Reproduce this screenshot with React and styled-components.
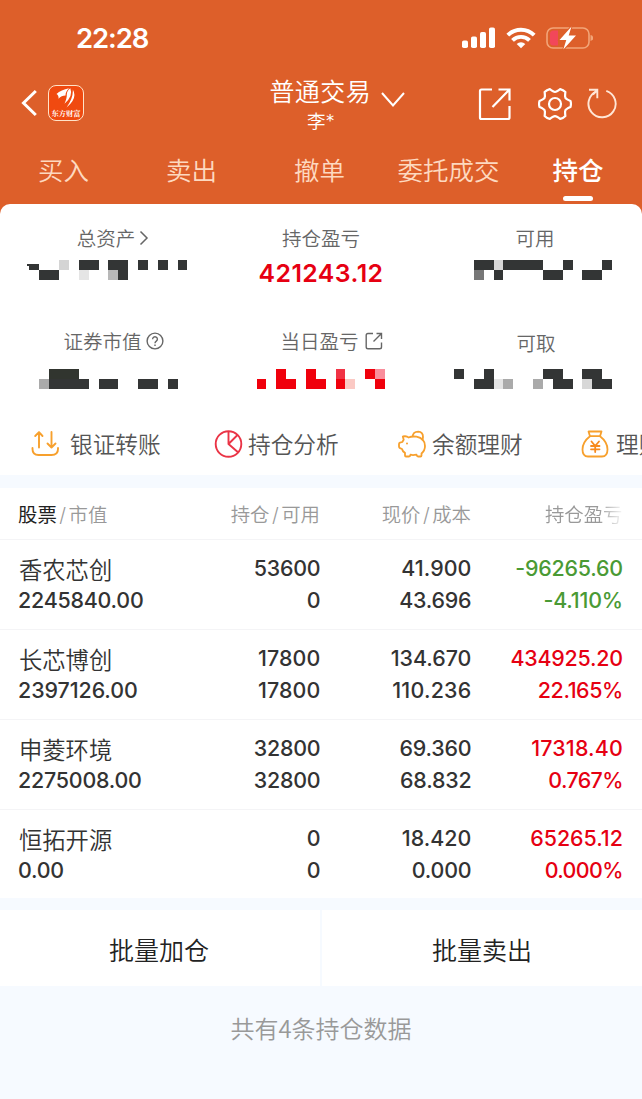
import React from "react";
import styled, { createGlobalStyle } from "styled-components";

const Global = createGlobalStyle`
  * { box-sizing: border-box; }
  body {
    margin: 0;
    background: #f6faff;
    font-family: Inter, "Noto Sans CJK SC", sans-serif;
    color: #333;
  }
`;

const Screen = styled.div`
  width: 642px;
  height: 1099px;
  overflow: hidden;
  display: flex;
  flex-direction: column;
  background: #f6faff;
`;

const Header = styled.header`
  height: 214px;
  margin-bottom: -10px;
  flex: none;
  background: #dd5f2a;
  color: #fff;
`;

const StatusBar = styled.div`
  height: 74px;
  padding: 1px 49px 0 76px;
  display: flex;
  align-items: center;
  justify-content: space-between;
`;

const Clock = styled.div`
  font-size: 27.5px;
  line-height: 32px;
  font-weight: 600;
  letter-spacing: -1.1px;
`;

const StatusIcons = styled.div`
  display: flex;
  align-items: center;
  height: 24px;
`;

const Glyph = styled.svg`
  display: block;
  flex: none;
  margin-left: ${(p) => p.$gap || 0}px;
  margin-top: ${(p) => p.$drop || 0}px;
`;

const NavBar = styled.div`
  height: 64px;
  display: grid;
  grid-template-columns: 214px 1fr 214px;
`;

const NavLeft = styled.div`
  display: flex;
  align-items: center;
  padding: 0 0 6px 20px;
`;

const AppBadge = styled.div`
  width: 36px;
  height: 36px;
  margin-left: 10px;
  border: 1px solid #ffe3c8;
  border-radius: 8px;
  background: #f04a10;
  display: flex;
  flex-direction: column;
  align-items: center;
  overflow: hidden;
`;

const BadgeText = styled.span`
  font: 700 7.3px/9px "Noto Serif CJK SC", "Noto Sans CJK SC", serif;
  white-space: nowrap;
`;

const Titles = styled.div`
  display: flex;
  flex-direction: column;
  align-items: center;
`;

const TitleRow = styled.div`
  display: flex;
  align-items: center;
  height: 31px;
  margin-left: 33px;
  font-size: 25px;
  font-weight: 350;
  letter-spacing: 0.4px;
  white-space: nowrap;
`;

const Account = styled.div`
  font-size: 18.5px;
  font-weight: 350;
  line-height: 32px;
  height: 32px;
`;

const NavRight = styled.div`
  display: flex;
  align-items: center;
  justify-content: flex-end;
  padding: 0 24px 5px 0;
`;

const Tabs = styled.nav`
  height: 66px;
  display: grid;
  grid-template-columns: 127px 129px 127px 131px 1fr;
`;

const Tab = styled.div`
  display: flex;
  flex-direction: column;
  align-items: center;
  padding-top: 14px;
  font-size: 25.5px;
  line-height: 38px;
  font-weight: ${(p) => (p.$active ? 500 : 350)};
  color: ${(p) => (p.$active ? "#fff" : "#fdd9c0")};

  &::after {
    content: "";
    width: 30px;
    height: 5px;
    margin-top: 6px;
    border-radius: 3px;
    background: ${(p) => (p.$active ? "#fff" : "transparent")};
  }
`;

const Summary = styled.section`
  height: 271px;
  flex: none;
  border-radius: 10px 10px 0 0;
  background: #fff;
  overflow: hidden;
`;

const StatGrid = styled.div`
  display: grid;
  grid-template-columns: repeat(3, 214px);
  grid-template-rows: 103px 107px;
`;

const Stat = styled.div`
  display: flex;
  flex-direction: column;
  align-items: center;
  padding-top: 18px;
`;

const StatLabel = styled.div`
  display: flex;
  align-items: center;
  height: 30px;
  padding-left: ${(p) => p.$shift || 0}px;
  margin-top: ${(p) => p.$drop || 0}px;
  margin-bottom: ${(p) => p.$below}px;
  font-size: 19.5px;
  font-weight: 350;
  color: #666;
  white-space: nowrap;
`;

const StatValue = styled.div`
  font-size: 24.8px;
  line-height: 30px;
  font-weight: 600;
  letter-spacing: 0.45px;
  color: #e60012;
`;

const Shortcuts = styled.div`
  display: flex;
  height: 61px;
  padding-left: 30px;
  overflow: hidden;
`;

const Shortcut = styled.div`
  flex: none;
  width: ${(p) => p.$width || 184}px;
  height: 58px;
  display: flex;
  align-items: center;
  gap: ${(p) => p.$gap}px;
  font-size: 22.7px;
  font-weight: 350;
  color: #555;
  white-space: nowrap;
`;

const Holdings = styled.section`
  flex: none;
  height: 410px;
  margin-top: 13px;
  background: #fff;
`;

const columns = "170px 132px 151px 151.5px";

const HeadRow = styled.div`
  height: 52px;
  padding: 0 0 0 18px;
  display: grid;
  grid-template-columns: ${columns};
  align-items: center;
  border-bottom: 1px solid #f4f4f6;
  font-size: 19.4px;
  font-weight: 350;
  color: #999;
  white-space: nowrap;
`;

const HeadCell = styled.div`
  text-align: ${(p) => (p.$first ? "left" : "right")};
  -webkit-mask-image: ${(p) => (p.$fade ? "linear-gradient(90deg, #000 84%, transparent 101%)" : "none")};

  b { font-weight: 400; color: #222; }
  i { font-style: normal; padding: 0 2.5px; }
`;

const Row = styled.div`
  height: 90px;
  padding: 13px 0 0 18px;
  display: grid;
  grid-template-columns: ${columns};
  border-bottom: 1px solid ${(p) => (p.$last ? "transparent" : "#f4f4f6")};
`;

const Cell = styled.div`
  text-align: ${(p) => (p.$first ? "left" : "right")};
  margin-right: ${(p) => (p.$first ? 0 : -0.4)}px;
  font-size: 21.4px;
  line-height: 31.5px;
  font-weight: 500;
  color: ${(p) => p.$color || "#333"};
  white-space: nowrap;
`;

const Line = styled.div`
  height: 31.5px;
  letter-spacing: ${(p) => p.$track}px;
`;

/* The narrow "1" of the typeface is opened up so that the columns keep an even width. */
const Figure = ({ children }) => {
  const ones = children.split("1").length - 1;
  const base = children.endsWith("%") ? -0.6 : -0.2;
  return <Line $track={(base + (ones * 1.5) / children.length).toFixed(2)}>{children}</Line>;
};

const Name = styled.div`
  height: 31.5px;
  padding: 2px 0 0 1px;
  font-size: 23.3px;
  font-weight: 350;
`;

const Actions = styled.div`
  flex: none;
  height: 76px;
  margin-top: 12px;
  display: grid;
  grid-template-columns: 320px 320px;
  gap: 2px;
`;

const Action = styled.button`
  border: 0;
  padding: 5px ${(p) => p.$right || 0}px 0 0;
  background: #fff;
  font: 350 25px/36px Inter, "Noto Sans CJK SC", sans-serif;
  color: #222;
`;

const Footnote = styled.p`
  margin: 24px 0 0;
  text-align: center;
  font: 350 24px/36px "Noto Sans CJK SC", sans-serif;
  color: #999;
`;

const D = "#333535";
const R = "#f0000c";

/* Each block is [x, row, width, colour] on a two-row grid of 10px cells. */
const hidden = {
  assets: [[27, 0, 12, D], [39, 1, 20, D], [59, 0, 10, "#d4d4d4"], [79, 0, 20, D], [79, 1, 10, "#e5e5e5"], [108, 0, 20, D], [108, 1, 10, "#b8b8b8"], [118, 1, 10, D], [138, 0, 10, D], [158, 0, 10, D], [178, 0, 9, D]],
  usable: [[46, 0, 20, D], [66, 0, 9, "#d8d8d8"], [75, 0, 40, D], [46, 1, 10, "#777"], [66, 1, 9, D], [115, 1, 20, D], [135, 0, 10, D], [154, 1, 20, D], [174, 0, 10, D]],
  market: [[39, 1, 10, "#aaa"], [49, 0, 30, "#31352f"], [49, 1, 40, D], [99, 1, 19, D], [138, 1, 20, D], [168, 1, 10, D]],
  today: [[43, 1, 9, R], [62, 0, 10, R], [62, 1, 20, R], [92, 0, 10, R], [92, 1, 20, R], [122, 0, 9, "#f13345"], [122, 1, 9, R], [131, 1, 10, "#fbc9c4"], [151, 0, 10, R], [161, 0, 10, "#f98d9b"], [161, 1, 10, R]],
  cash: [[26, 0, 10, D], [56, 0, 10, D], [46, 1, 20, D], [66, 1, 9, "#e4e4e4"], [75, 1, 10, "#aaa"], [105, 1, 10, "#aaa"], [115, 0, 20, D], [125, 1, 20, D], [154, 0, 20, D], [154, 1, 10, "#d8d8d8"], [164, 1, 20, D]],
};

const Mosaic = ({ blocks, clip }) => (
  <Glyph width="214" height="20" shapeRendering="crispEdges">
    {blocks.map(([x, row, w, fill], i) => (
      <rect key={i} x={x} y={row * 10} width={w} height="10" fill={fill} />
    ))}
    {clip && <path d="M27 0h12v4H27zM27 6h2v4h-2z" fill="#fff" />}
  </Glyph>
);

const Signal = () => (
  <Glyph width="34" height="22" viewBox="0 0 34 22" fill="#fff">
    <rect x="0" y="13.5" width="6" height="7.5" rx="1.8" />
    <rect x="9" y="9.5" width="6" height="11.5" rx="1.8" />
    <rect x="18" y="5" width="6" height="16" rx="1.8" />
    <rect x="27" y="0.5" width="6" height="20.5" rx="1.8" />
  </Glyph>
);

const Wifi = () => (
  <Glyph $gap={10} width="30" height="22" viewBox="0 0 30 22" fill="none" stroke="#fff" strokeWidth="3.9">
    <path d="M1.800 8.200a18.600 18.600 0 0 1 26.400 0" />
    <path d="M6.500 13.400a12 12 0 0 1 17 0" />
    <path d="M15 21.300l-4.300-4.200a6.200 6.200 0 0 1 8.600 0z" fill="#fff" stroke="none" />
  </Glyph>
);

const Battery = () => (
  <Glyph $gap={9} width="48" height="24" viewBox="0 0 48 24">
    <rect x="2" y="2" width="42" height="20" rx="6" fill="none" stroke="#f2a578" strokeWidth="1.6" />
    <path d="M8.500 4.500H13v15H8.500Q5 19.500 5 16V8Q5 4.500 8.500 4.500z" fill="#f2475a" />
    <path d="M45.500 9q3 .8 3 3t-3 3z" fill="#f2a578" />
    <path d="M26.500.5 14.500 14h6.800l-3 9.500L31 9.500h-7.300z" fill="#fff" stroke="#dd5f2a" strokeWidth="2" paintOrder="stroke" />
  </Glyph>
);

const Back = () => (
  <Glyph width="18" height="28" viewBox="0 0 18 28" fill="none" stroke="#fff" strokeWidth="3">
    <path d="M15.800 2 3.500 14l12.300 12" />
  </Glyph>
);

const BrandMark = () => (
  <Glyph width="22" height="23" viewBox="0 0 22 23" fill="#fff">
    <path d="M1.500 8Q6 4 14 2.300 10.500 5.500 10.500 9.500 6.500 9.500 3.500 12.800 4 9.500 1.500 8z" />
    <path d="M15.300 2.300Q18.500 10 9.500 17.800 12 12 11.800 8.500 12 4.500 15.300 2.300z" />
    <path d="M17.800 3.500Q23 12 11.500 21.500 18.500 12 17.800 3.500z" />
  </Glyph>
);

const ChevronDown = () => (
  <Glyph $gap={8.500} $drop={19} width="26" height="18" viewBox="0 0 26 18" fill="none" stroke="#fff" strokeWidth="2">
    <path d="M2 3 13 15.500 24 3" />
  </Glyph>
);

const Share = () => (
  <Glyph width="34" height="34" viewBox="0 0 34 34" fill="none" stroke="#fff" strokeWidth="2.200">
    <path d="M14 2.500H3.500Q2 2.500 2 4V30.500q0 1.500 1.500 1.500H30q1.500 0 1.500-1.500V19" />
    <path d="M20.500 2.500h11V13.500M31.500 2.500 14.500 20" />
  </Glyph>
);

/* Outline of a six-lobed wheel: rounded lobes joined by concave curves. */
const gearPath = (() => {
  const at = (r, deg) => {
    const a = (deg * Math.PI) / 180;
    return `${(17 + r * Math.cos(a)).toFixed(2)} ${(17 + r * Math.sin(a)).toFixed(2)}`;
  };
  let d = `M${at(15.8, -11)}`;
  for (let a = 0; a < 360; a += 60) {
    d += `Q${at(16.4, a)} ${at(15.8, a + 11)}Q${at(14, a + 16)} ${at(13, a + 21)}`;
    d += `Q${at(11.3, a + 30)} ${at(13, a + 39)}Q${at(14, a + 44)} ${at(15.8, a + 49)}`;
  }
  return d + "Z";
})();

const Gear = () => (
  <Glyph $gap={26} width="34" height="34" viewBox="0 0 34 34" fill="none" stroke="#fff" strokeWidth="2.200" strokeLinejoin="round">
    <path d={gearPath} />
    <circle cx="17" cy="17" r="6" />
  </Glyph>
);

const Refresh = () => (
  <Glyph $gap={14} width="32" height="34" viewBox="0 0 32 34" fill="none" stroke="#ffe6d6" strokeWidth="1.900">
    <path d="M20.300 3.800A13.600 13.600 0 1 1 10.500 4.300" />
    <path d="M3 2.800h8.300v8.400M11.300 2.800 7 7.500" />
  </Glyph>
);

const ChevronRight = () => (
  <Glyph $gap={4} $drop={1} width="10" height="16" viewBox="0 0 10 16" fill="none" stroke="#666" strokeWidth="1.500">
    <path d="m1.500 1.500 6.500 6.500-6.500 6.500" />
  </Glyph>
);

const Help = () => (
  <Glyph $gap={4} $drop={1} width="18" height="18" viewBox="0 0 18 18" fill="none" stroke="#666" strokeWidth="1.400">
    <circle cx="9" cy="9" r="7.900" />
    <path d="M6.600 7.200a2.400 2.400 0 1 1 3.700 2Q9 10 9 11.200M9 12.500v1.500" />
  </Glyph>
);

const SmallShare = () => (
  <Glyph $gap={6} $drop={1} width="18" height="18" viewBox="0 0 18 18" fill="none" stroke="#666" strokeWidth="1.400">
    <path d="M8 1.500H3q-1.800 0-1.800 1.800V15q0 1.800 1.800 1.800h11.700q1.800 0 1.800-1.800v-4.500" />
    <path d="M11.500 1.500h5V7M16.500 1.500 8.500 9.500" />
  </Glyph>
);

const Transfer = () => (
  <Glyph $drop={2} width="30" height="28" viewBox="0 0 30 28" fill="none" stroke="#f7a02d" strokeWidth="1.900" strokeLinecap="round" strokeLinejoin="round">
    <path d="M9 17.500V2.200L5.200 6M9 2.200 12.500 6M21.500 2v15.500l4-4M21.500 17.500l-4-4" />
    <path d="M2.500 18v1q0 6 6 6h13q6.500 0 6.500-6v-1" />
  </Glyph>
);

const Pie = () => (
  <Glyph $drop={2} width="29" height="28" viewBox="0 0 29 28" fill="none" stroke="#ea3446" strokeWidth="1.900" strokeLinejoin="round">
    <circle cx="14.500" cy="14" r="12.800" />
    <path d="M14.500 1.200V14l9.500 8.300M14.500 14l9-9" />
  </Glyph>
);

const Piggy = () => (
  <Glyph $drop={2} width="28" height="28" viewBox="0 0 28 28" fill="none" stroke="#f7a02d" strokeWidth="1.800" strokeLinejoin="round">
    <path d="M4.800 6.500q4-.8 5.700 1 3.500-1.500 8-.8 8.500 1.800 8.500 9.300 0 4.500-3.500 7.500v2q0 1-1 1H20q-1 0-1.500-1.800-4 .8-6 0-.3 1.800-1.500 1.800H8q-1 0-1-1v-2.600Q4.500 21.500 4 19l-2-.8q-1-.5-1-1.700V14q0-1 1-1.300l2.300-.7q.8-1.500 1.400-2.300z" />
    <path d="M14.500 7q.5-5.300 5.700-5.300Q25 2 25 7q0 2-1 3.500" />
    <circle cx="9" cy="13.500" r="1" fill="#f7a02d" stroke="none" />
  </Glyph>
);

const MoneyBag = () => (
  <Glyph $drop={2} width="28" height="28" viewBox="0 0 28 28" fill="none" stroke="#f7a02d" strokeWidth="1.800" strokeLinejoin="round" strokeLinecap="round">
    <path d="M7.500 1.500h13L19 6.200H9zM9 6.200Q1.500 12 1.500 19.500q0 7 5.500 7h14q5.500 0 5.500-7Q26.500 12 19 6.200" />
    <path d="m10.500 11.500 3.700 4.500 3.800-4.500M10 16h8.500M10 19.300h8.500M14.200 16v6" stroke="#f78a1d" />
  </Glyph>
);

const RED = "#e60012";
const GREEN = "#4a9a34";

const holdings = [
  { name: "香农芯创", value: "2245840.00", held: "53600", usable: "0", price: "41.900", cost: "43.696", profit: "-96265.60", rate: "-4.110%", color: GREEN },
  { name: "长芯博创", value: "2397126.00", held: "17800", usable: "17800", price: "134.670", cost: "110.236", profit: "434925.20", rate: "22.165%", color: RED },
  { name: "申菱环境", value: "2275008.00", held: "32800", usable: "32800", price: "69.360", cost: "68.832", profit: "17318.40", rate: "0.767%", color: RED },
  { name: "恒拓开源", value: "0.00", held: "0", usable: "0", price: "18.420", cost: "0.000", profit: "65265.12", rate: "0.000%", color: RED },
];

export default function App() {
  return (
    <Screen>
      <Global />
      <Header>
        <StatusBar>
          <Clock>22:28</Clock>
          <StatusIcons>
            <Signal />
            <Wifi />
            <Battery />
          </StatusIcons>
        </StatusBar>
        <NavBar>
          <NavLeft>
            <Back />
            <AppBadge>
              <BrandMark />
              <BadgeText>东方财富</BadgeText>
            </AppBadge>
          </NavLeft>
          <Titles>
            <TitleRow>
              普通交易
              <ChevronDown />
            </TitleRow>
            <Account>李*</Account>
          </Titles>
          <NavRight>
            <Share />
            <Gear />
            <Refresh />
          </NavRight>
        </NavBar>
        <Tabs>
          <Tab>买入</Tab>
          <Tab>卖出</Tab>
          <Tab>撤单</Tab>
          <Tab>委托成交</Tab>
          <Tab $active>持仓</Tab>
        </Tabs>
      </Header>

      <Summary>
        <StatGrid>
          <Stat>
            <StatLabel $shift={12} $below={8}>总资产<ChevronRight /></StatLabel>
            <Mosaic blocks={hidden.assets} clip />
          </Stat>
          <Stat>
            <StatLabel $below={6}>持仓盈亏</StatLabel>
            <StatValue>421243.12</StatValue>
          </Stat>
          <Stat>
            <StatLabel $below={8}>可用</StatLabel>
            <Mosaic blocks={hidden.usable} />
          </Stat>
          <Stat>
            <StatLabel $shift={13} $below={14}>证券市值<Help /></StatLabel>
            <Mosaic blocks={hidden.market} />
          </Stat>
          <Stat>
            <StatLabel $shift={21} $below={14}>当日盈亏<SmallShare /></StatLabel>
            <Mosaic blocks={hidden.today} />
          </Stat>
          <Stat>
            <StatLabel $shift={2} $drop={2} $below={12}>可取</StatLabel>
            <Mosaic blocks={hidden.cash} />
          </Stat>
        </StatGrid>
        <Shortcuts>
          <Shortcut $gap={10}><Transfer />银证转账</Shortcut>
          <Shortcut $gap={5}><Pie />持仓分析</Shortcut>
          <Shortcut $gap={6} $width={183}><Piggy />余额理财</Shortcut>
          <Shortcut $gap={7}><MoneyBag />理财</Shortcut>
        </Shortcuts>
      </Summary>

      <Holdings>
        <HeadRow>
          <HeadCell $first><b>股票</b><i>/</i>市值</HeadCell>
          <HeadCell>持仓<i>/</i>可用</HeadCell>
          <HeadCell>现价<i>/</i>成本</HeadCell>
          <HeadCell $fade>持仓盈亏</HeadCell>
        </HeadRow>
        {holdings.map((h, i) => (
          <Row key={h.name} $last={i === holdings.length - 1}>
            <Cell $first>
              <Name>{h.name}</Name>
              <Figure>{h.value}</Figure>
            </Cell>
            <Cell>
              <Figure>{h.held}</Figure>
              <Figure>{h.usable}</Figure>
            </Cell>
            <Cell>
              <Figure>{h.price}</Figure>
              <Figure>{h.cost}</Figure>
            </Cell>
            <Cell $color={h.color}>
              <Figure>{h.profit}</Figure>
              <Figure>{h.rate}</Figure>
            </Cell>
          </Row>
        ))}
      </Holdings>

      <Actions>
        <Action $right={2}>批量加仓</Action>
        <Action>批量卖出</Action>
      </Actions>
      <Footnote>共有4条持仓数据</Footnote>
    </Screen>
  );
}
